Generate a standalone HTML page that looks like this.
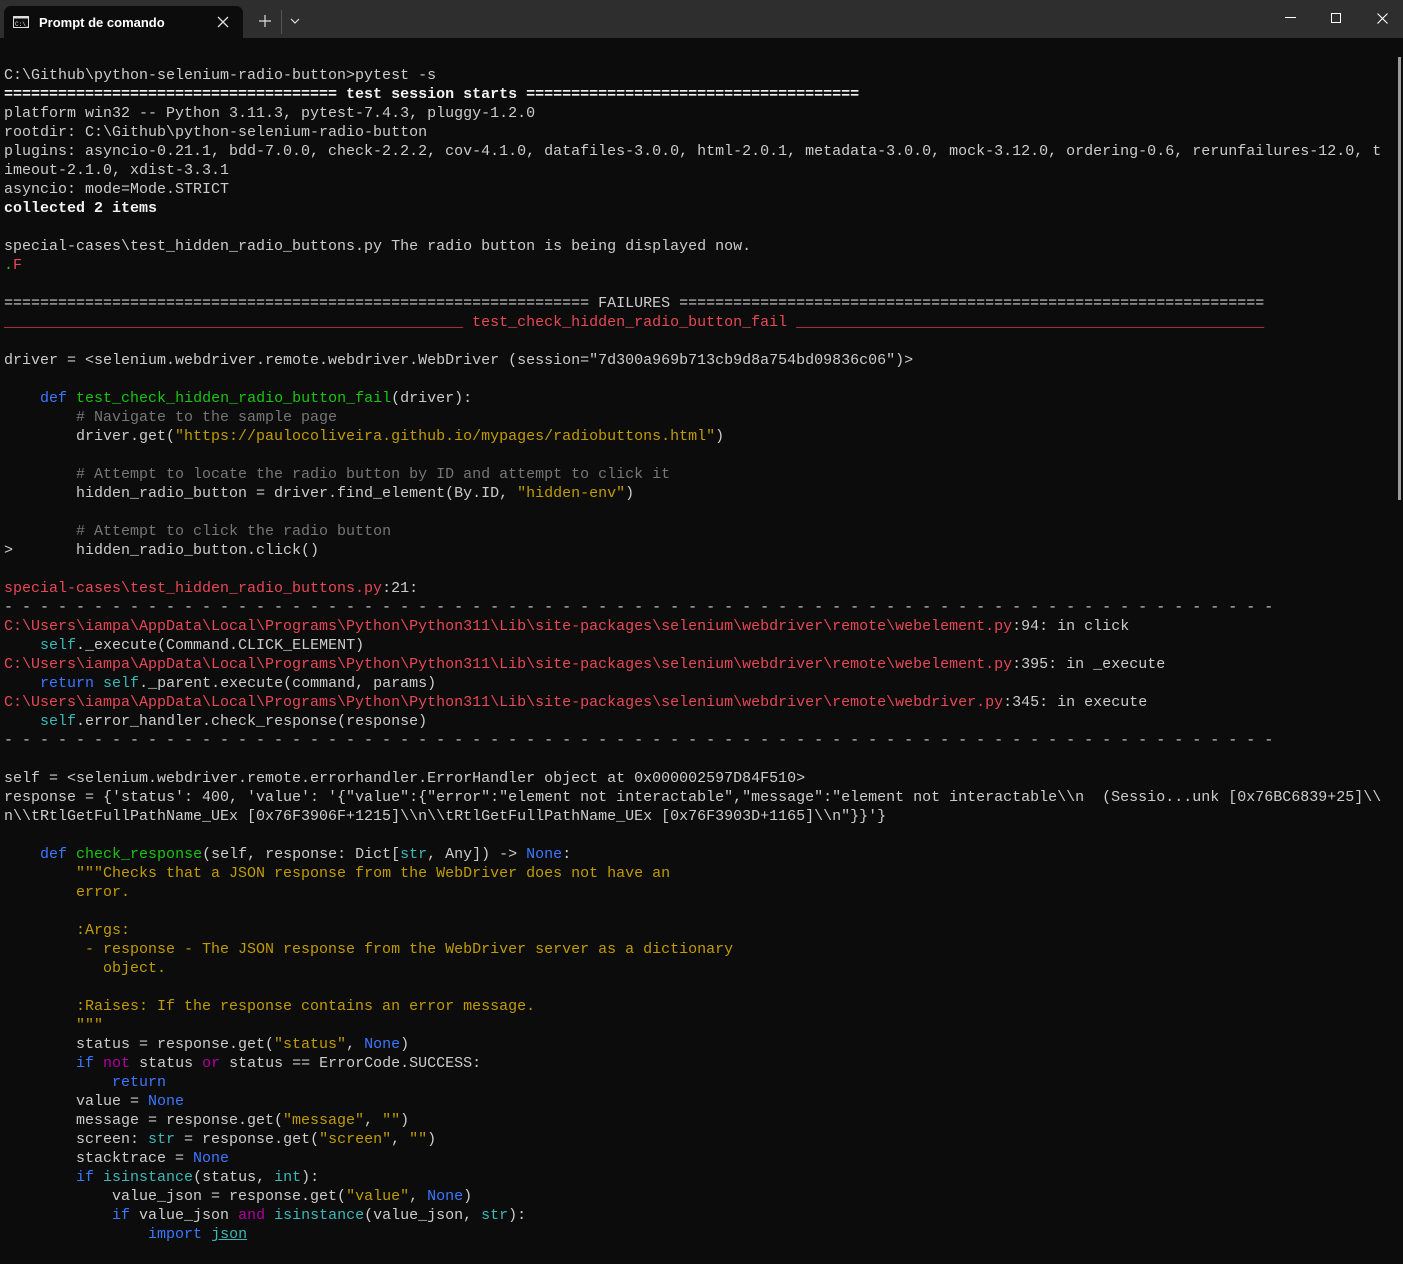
<!DOCTYPE html>
<html><head><meta charset="utf-8"><style>
*{margin:0;padding:0;box-sizing:border-box}
html,body{width:1403px;height:1264px;background:#0c0c0c;overflow:hidden}
#tb{position:absolute;left:0;top:0;width:1403px;height:38px;background:#2e2e2e}
#tab{position:absolute;left:4px;top:6px;width:239px;height:32px;background:#0c0c0c;border-radius:7px 7px 0 0}
#tab .t{position:absolute;left:35px;top:9px;font:bold 13px "Liberation Sans",sans-serif;color:#fff}
#term{position:absolute;left:4px;top:66px;width:1395px;font:15px/19px "Liberation Mono",monospace;color:#cccccc}
#term div{height:19px;white-space:pre;overflow:visible}
.b{font-weight:bold;color:#f2f2f2}.r{color:#e74856}.g{color:#16c60c}.k{color:#3b78ff}.y{color:#c19c00}.c{color:#767676}.m{color:#b4009e}.cy{color:#3cb8b8}
.u{text-decoration:underline}
#sb{position:absolute;left:1398px;top:57px;width:3px;height:443px;background:#9a9a9a}
</style></head><body>
<div id="tb">
<div id="tab">
<svg style="position:absolute;left:9px;top:10px" width="16" height="12" viewBox="0 0 16 12"><rect x="0.5" y="0.5" width="15" height="11" fill="none" stroke="#ddd"/><rect x="0.5" y="0.5" width="15" height="2" fill="#ddd"/><text x="2" y="10" font-size="6" fill="#ddd" font-family="Liberation Mono">C:\_</text></svg>
<div class="t">Prompt de comando</div>
<svg style="position:absolute;left:213px;top:10px" width="12" height="12"><path d="M1 1L11 11M11 1L1 11" stroke="#ddd" stroke-width="1.3"/></svg>
</div>
<svg style="position:absolute;left:259px;top:15px" width="12" height="12"><path d="M6 0V12M0 6H12" stroke="#ddd" stroke-width="1.2"/></svg>
<div style="position:absolute;left:281px;top:10px;width:1px;height:24px;background:#555"></div>
<svg style="position:absolute;left:290px;top:18px" width="10" height="6"><path d="M1 1L5 5L9 1" stroke="#ddd" fill="none" stroke-width="1.2"/></svg>
<div style="position:absolute;left:1285px;top:17px;width:11px;height:1px;background:#fff"></div>
<div style="position:absolute;left:1331px;top:13px;width:10px;height:10px;border:1px solid #fff"></div>
<svg style="position:absolute;left:1377px;top:13px" width="11" height="11"><path d="M0.5 0.5L10.5 10.5M10.5 0.5L0.5 10.5" stroke="#fff" stroke-width="1.1"/></svg>
</div>
<div id="sb"></div>
<div id="term"><div>C:\Github\python-selenium-radio-button&gt;pytest -s</div><div class="b">===================================== test session starts =====================================</div><div>platform win32 -- Python 3.11.3, pytest-7.4.3, pluggy-1.2.0</div><div>rootdir: C:\Github\python-selenium-radio-button</div><div>plugins: asyncio-0.21.1, bdd-7.0.0, check-2.2.2, cov-4.1.0, datafiles-3.0.0, html-2.0.1, metadata-3.0.0, mock-3.12.0, ordering-0.6, rerunfailures-12.0, t</div><div>imeout-2.1.0, xdist-3.3.1</div><div>asyncio: mode=Mode.STRICT</div><div class="b">collected 2 items</div><div></div><div>special-cases\test_hidden_radio_buttons.py The radio button is being displayed now.</div><div><span class="g">.</span><span class="r">F</span></div><div></div><div>================================================================= FAILURES =================================================================</div><div class="r">___________________________________________________ test_check_hidden_radio_button_fail ____________________________________________________</div><div></div><div>driver = &lt;selenium.webdriver.remote.webdriver.WebDriver (session="7d300a969b713cb9d8a754bd09836c06")&gt;</div><div></div><div>    <span class="k">def</span> <span class="g">test_check_hidden_radio_button_fail</span>(driver):</div><div>        <span class="c"># Navigate to the sample page</span></div><div>        driver.get(<span class="y">"https://paulocoliveira.github.io/mypages/radiobuttons.html"</span>)</div><div></div><div>        <span class="c"># Attempt to locate the radio button by ID and attempt to click it</span></div><div>        hidden_radio_button = driver.find_element(By.ID, <span class="y">"hidden-env"</span>)</div><div></div><div>        <span class="c"># Attempt to click the radio button</span></div><div>&gt;       hidden_radio_button.click()</div><div></div><div><span class="r">special-cases\test_hidden_radio_buttons.py</span>:21:</div><div>- - - - - - - - - - - - - - - - - - - - - - - - - - - - - - - - - - - - - - - - - - - - - - - - - - - - - - - - - - - - - - - - - - - - - - -</div><div><span class="r">C:\Users\iampa\AppData\Local\Programs\Python\Python311\Lib\site-packages\selenium\webdriver\remote\webelement.py</span>:94: in click</div><div>    <span class="cy">self</span>._execute(Command.CLICK_ELEMENT)</div><div><span class="r">C:\Users\iampa\AppData\Local\Programs\Python\Python311\Lib\site-packages\selenium\webdriver\remote\webelement.py</span>:395: in _execute</div><div>    <span class="k">return</span> <span class="cy">self</span>._parent.execute(command, params)</div><div><span class="r">C:\Users\iampa\AppData\Local\Programs\Python\Python311\Lib\site-packages\selenium\webdriver\remote\webdriver.py</span>:345: in execute</div><div>    <span class="cy">self</span>.error_handler.check_response(response)</div><div>- - - - - - - - - - - - - - - - - - - - - - - - - - - - - - - - - - - - - - - - - - - - - - - - - - - - - - - - - - - - - - - - - - - - - - -</div><div></div><div>self = &lt;selenium.webdriver.remote.errorhandler.ErrorHandler object at 0x000002597D84F510&gt;</div><div>response = {'status': 400, 'value': '{"value":{"error":"element not interactable","message":"element not interactable\\n  (Sessio...unk [0x76BC6839+25]\\</div><div>n\\tRtlGetFullPathName_UEx [0x76F3906F+1215]\\n\\tRtlGetFullPathName_UEx [0x76F3903D+1165]\\n"}}'}</div><div></div><div>    <span class="k">def</span> <span class="g">check_response</span>(self, response: Dict[<span class="cy">str</span>, Any]) -&gt; <span class="k">None</span>:</div><div>        <span class="y">"""Checks that a JSON response from the WebDriver does not have an</span></div><div><span class="y">        error.</span></div><div></div><div><span class="y">        :Args:</span></div><div><span class="y">         - response - The JSON response from the WebDriver server as a dictionary</span></div><div><span class="y">           object.</span></div><div></div><div><span class="y">        :Raises: If the response contains an error message.</span></div><div><span class="y">        """</span></div><div>        status = response.get(<span class="y">"status"</span>, <span class="k">None</span>)</div><div>        <span class="k">if</span> <span class="m">not</span> status <span class="m">or</span> status == ErrorCode.SUCCESS:</div><div>            <span class="k">return</span></div><div>        value = <span class="k">None</span></div><div>        message = response.get(<span class="y">"message"</span>, <span class="y">""</span>)</div><div>        screen: <span class="cy">str</span> = response.get(<span class="y">"screen"</span>, <span class="y">""</span>)</div><div>        stacktrace = <span class="k">None</span></div><div>        <span class="k">if</span> <span class="cy">isinstance</span>(status, <span class="cy">int</span>):</div><div>            value_json = response.get(<span class="y">"value"</span>, <span class="k">None</span>)</div><div>            <span class="k">if</span> value_json <span class="m">and</span> <span class="cy">isinstance</span>(value_json, <span class="cy">str</span>):</div><div>                <span class="k">import</span> <span class="cy u">json</span></div></div>
</body></html>
